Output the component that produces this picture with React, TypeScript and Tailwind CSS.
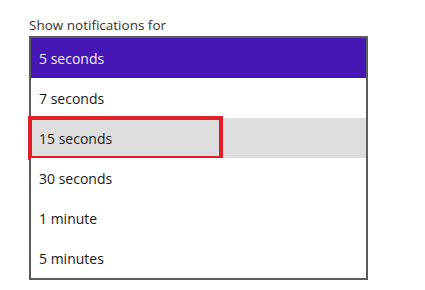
import React from 'react';

const options = ['5 seconds', '7 seconds', '15 seconds', '30 seconds', '1 minute', '5 minutes'];

export default function App() {
  const selected = 0;
  const hovered = 2;

  return (
    <div className="w-[425px] h-[290px] bg-white pl-[29px] pt-[16px] font-['Segoe_UI','Open_Sans','Noto_Sans',sans-serif]">
      <div className="text-[13.5px] leading-[18px] text-[#333]">Show notifications for</div>
      <div className="mt-[2px] w-[339px] border-2 border-[#5c5c5c] flex flex-col">
        {options.map((opt, i) => (
          <div
            key={opt}
            className={
              'relative h-[40px] flex items-center pl-[8px] text-[14px] ' +
              (i === selected
                ? 'bg-[#4617b4] text-[#f0ecfa]'
                : i === hovered
                ? 'bg-[#dedede] text-[#1a1a1a]'
                : 'bg-white text-[#1a1a1a]')
            }
          >
            {opt}
            {i === hovered && (
              <div className="absolute left-[-3px] top-[-2px] w-[195px] h-[44px] border-[4px] border-[#e01e2a]" />
            )}
          </div>
        ))}
      </div>
    </div>
  );
}
